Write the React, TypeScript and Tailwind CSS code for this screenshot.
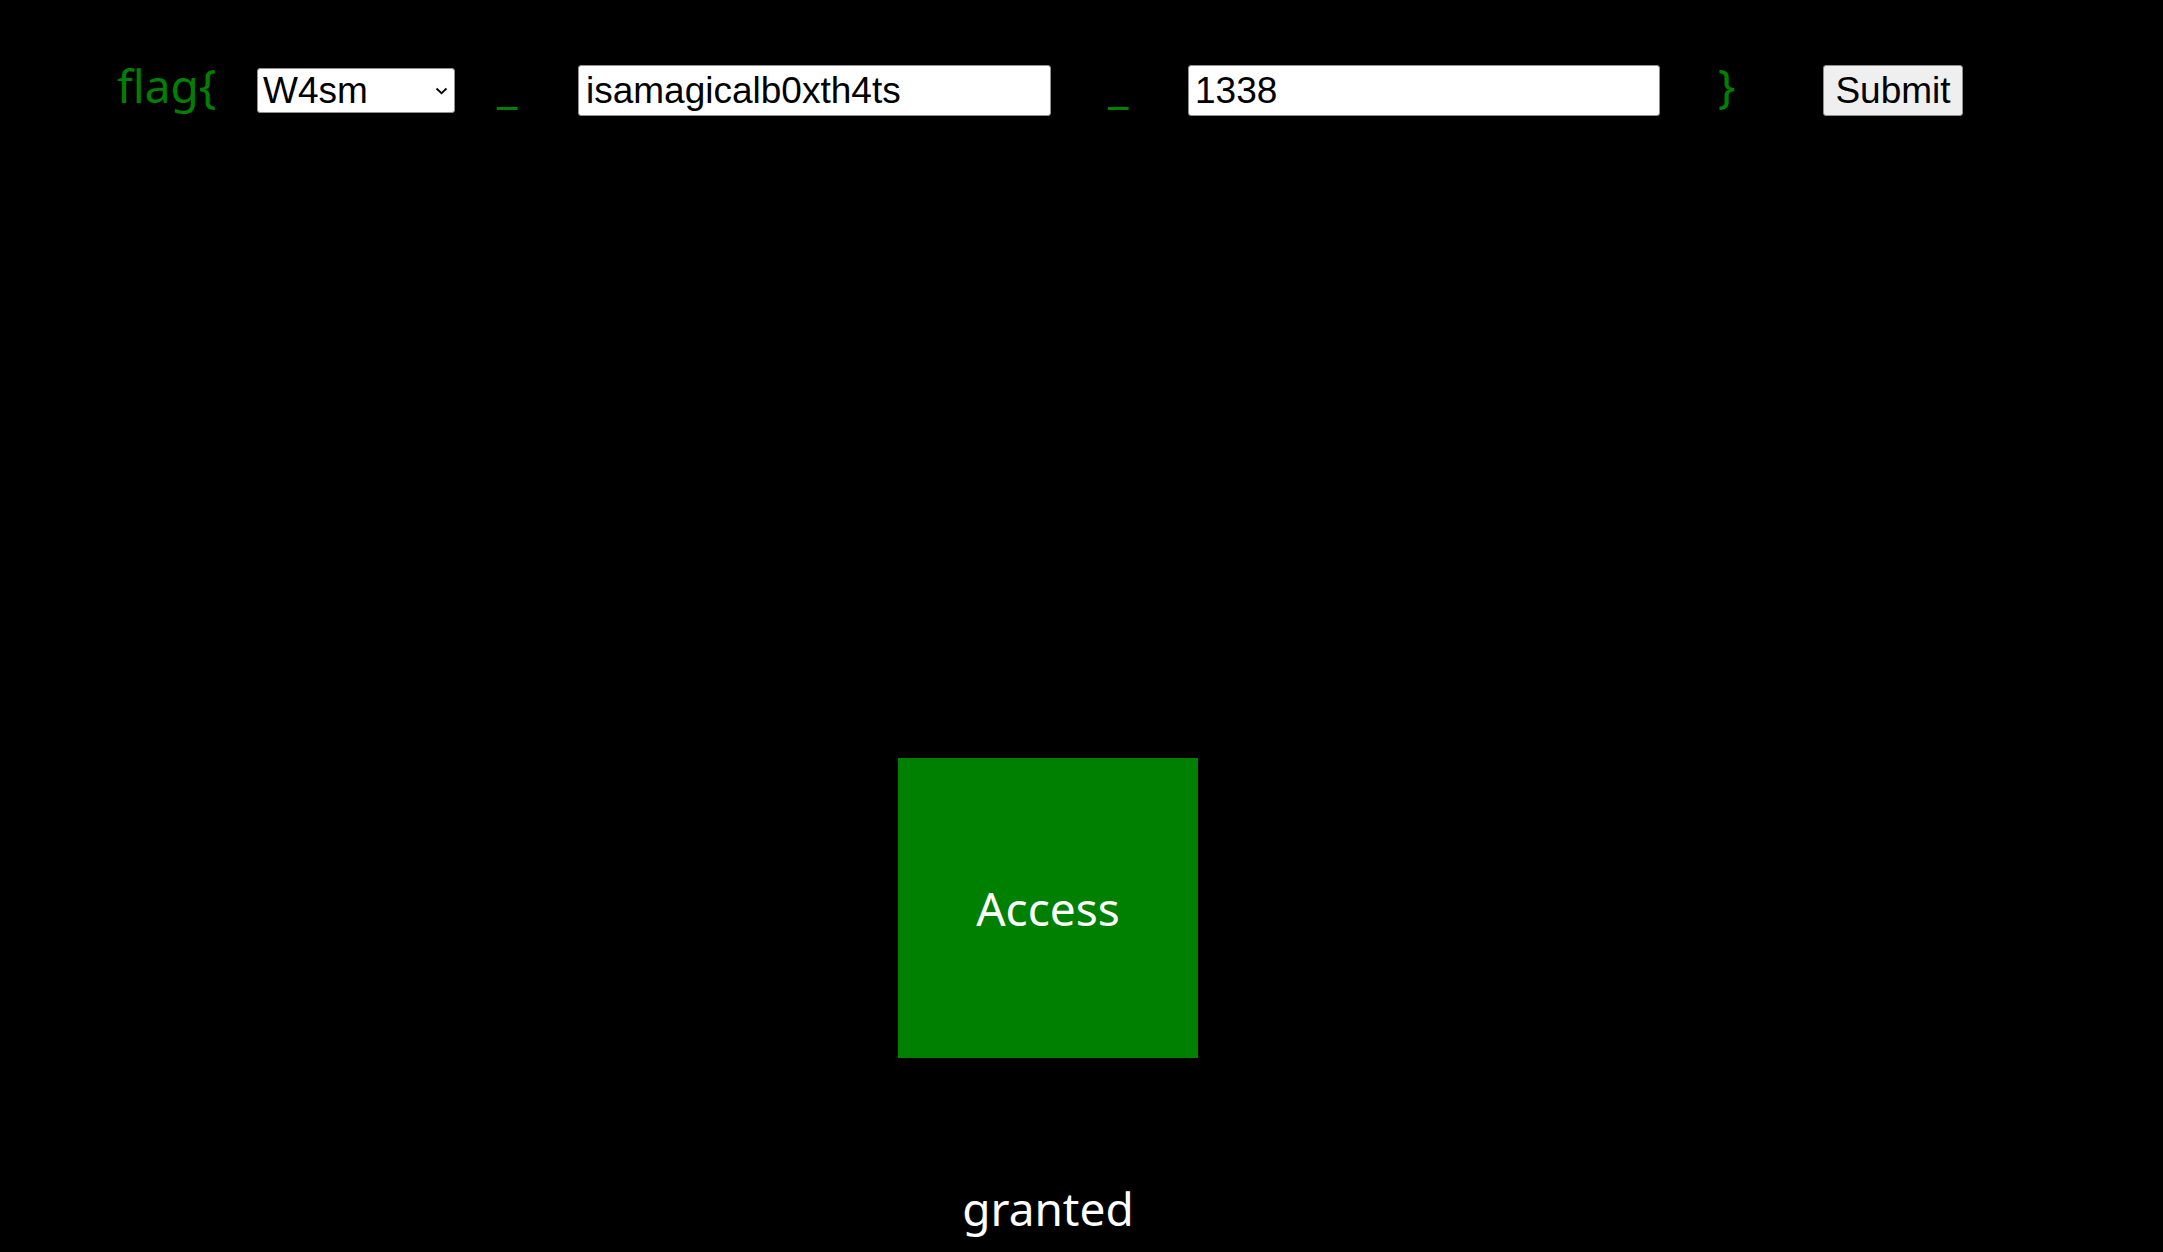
import React from "react";

export default function App() {
  return (
    <div className="min-h-screen w-full bg-black overflow-hidden">
      <form className="flex items-start pt-[57px] pl-[117px]" onSubmit={(e) => e.preventDefault()}>
        <span className="w-[140px] mt-[4px] font-['Noto_Sans','Open_Sans',sans-serif] text-[46px] leading-[48px] text-[#008000]">
          flag{"{"}
        </span>
        <div className="relative mt-[11px] w-[198px] h-[45px]">
          <select
            className="appearance-none w-full h-full bg-white text-black rounded-[3px] border border-[#8f8f8f] pl-[5px] font-['Liberation_Sans',Arial,sans-serif] text-[37px] leading-[43px] outline-none"
            defaultValue="W4sm"
          >
            <option value="W4sm">W4sm</option>
          </select>
          <svg
            className="absolute right-[7px] top-[19px] pointer-events-none"
            width="13"
            height="8"
            viewBox="0 0 13 8"
          >
            <path d="M1.5 1.5 L6.5 6.2 L11.5 1.5" fill="none" stroke="#000" strokeWidth="1.8" />
          </svg>
        </div>
        <span className="w-[123px] pl-[42px] mt-[4px] font-['Noto_Sans','Open_Sans',sans-serif] text-[46px] leading-[48px] text-[#008000]">
          _
        </span>
        <input
          className="mt-[8px] w-[473px] h-[51px] bg-white text-black rounded-[3px] border border-[#8f8f8f] px-[7px] font-['Liberation_Sans',Arial,sans-serif] text-[37px] outline-none"
          defaultValue="isamagicalb0xth4ts"
        />
        <span className="w-[137px] pl-[57px] mt-[4px] font-['Noto_Sans','Open_Sans',sans-serif] text-[46px] leading-[48px] text-[#008000]">
          _
        </span>
        <input
          className="mt-[8px] w-[472px] h-[51px] bg-white text-black rounded-[3px] border border-[#8f8f8f] px-[6px] font-['Liberation_Sans',Arial,sans-serif] text-[37px] outline-none"
          defaultValue="1338"
        />
        <span className="w-[163px] pl-[58px] mt-[4px] font-['Noto_Sans','Open_Sans',sans-serif] text-[46px] leading-[48px] text-[#008000]">
          {"}"}
        </span>
        <button
          type="submit"
          className="mt-[8px] w-[140px] h-[51px] bg-[#efefef] text-black rounded-[3px] border border-[#8f8f8f] font-['Liberation_Sans',Arial,sans-serif] text-[37px] leading-none"
        >
          Submit
        </button>
      </form>
      <div className="ml-[898px] mt-[642px] w-[300px] flex flex-col items-center font-['Noto_Sans','Open_Sans',sans-serif]">
        <div className="w-[300px] h-[300px] bg-[#008000] flex items-center justify-center text-white text-[46px] leading-[48px]">
          Access
        </div>
        <div className="mt-[126px] text-white text-[46px] leading-[48px]">granted</div>
      </div>
    </div>
  );
}
